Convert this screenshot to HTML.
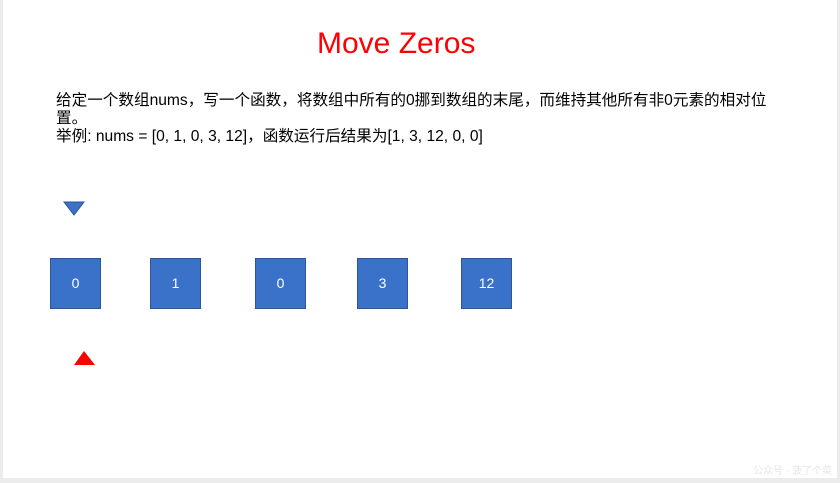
<!DOCTYPE html>
<html><head><meta charset="utf-8"><style>
body{margin:0;width:840px;height:483px;background:#ececec;position:relative;overflow:hidden;font-family:"Liberation Sans","Noto Sans CJK SC",sans-serif}
.slide{position:absolute;left:3px;top:0;width:834px;height:478px;background:#fff}
.t{position:absolute;left:317px;top:27px;font-size:30px;color:#f00;white-space:nowrap}
.p{position:absolute;left:56px;top:92px;font-size:15.6px;line-height:18px;color:#000;white-space:nowrap}
.b{position:absolute;top:258px;width:49px;height:49px;background:#3a72c9;border:1px solid #2f5597;color:#fff;font-size:14px;text-align:center;line-height:49px}
.w{position:absolute;right:8px;top:462px;font-size:10px;color:#e6e6e6}
</style></head><body>
<div class="slide"></div>
<div class="t">Move Zeros</div>
<div class="p">给定一个数组nums，写一个函数，将数组中所有的0挪到数组的末尾，而维持其他所有非0元素的相对位<br>置。<br>举例: nums = [0, 1, 0, 3, 12]，函数运行后结果为[1, 3, 12, 0, 0]</div>
<svg style="position:absolute;left:0;top:0" width="840" height="483">
<polygon points="64,202 84,202 74,215" fill="#3a72c9" stroke="#2f5597" stroke-width="1"/>
<polygon points="84,351 95,365 74,365" fill="#f00"/>
</svg>
<div class="b" style="left:50px">0</div>
<div class="b" style="left:150px">1</div>
<div class="b" style="left:255px">0</div>
<div class="b" style="left:357px">3</div>
<div class="b" style="left:461px">12</div>
<div class="w">公众号 · 菠了个菜</div>
</body></html>
